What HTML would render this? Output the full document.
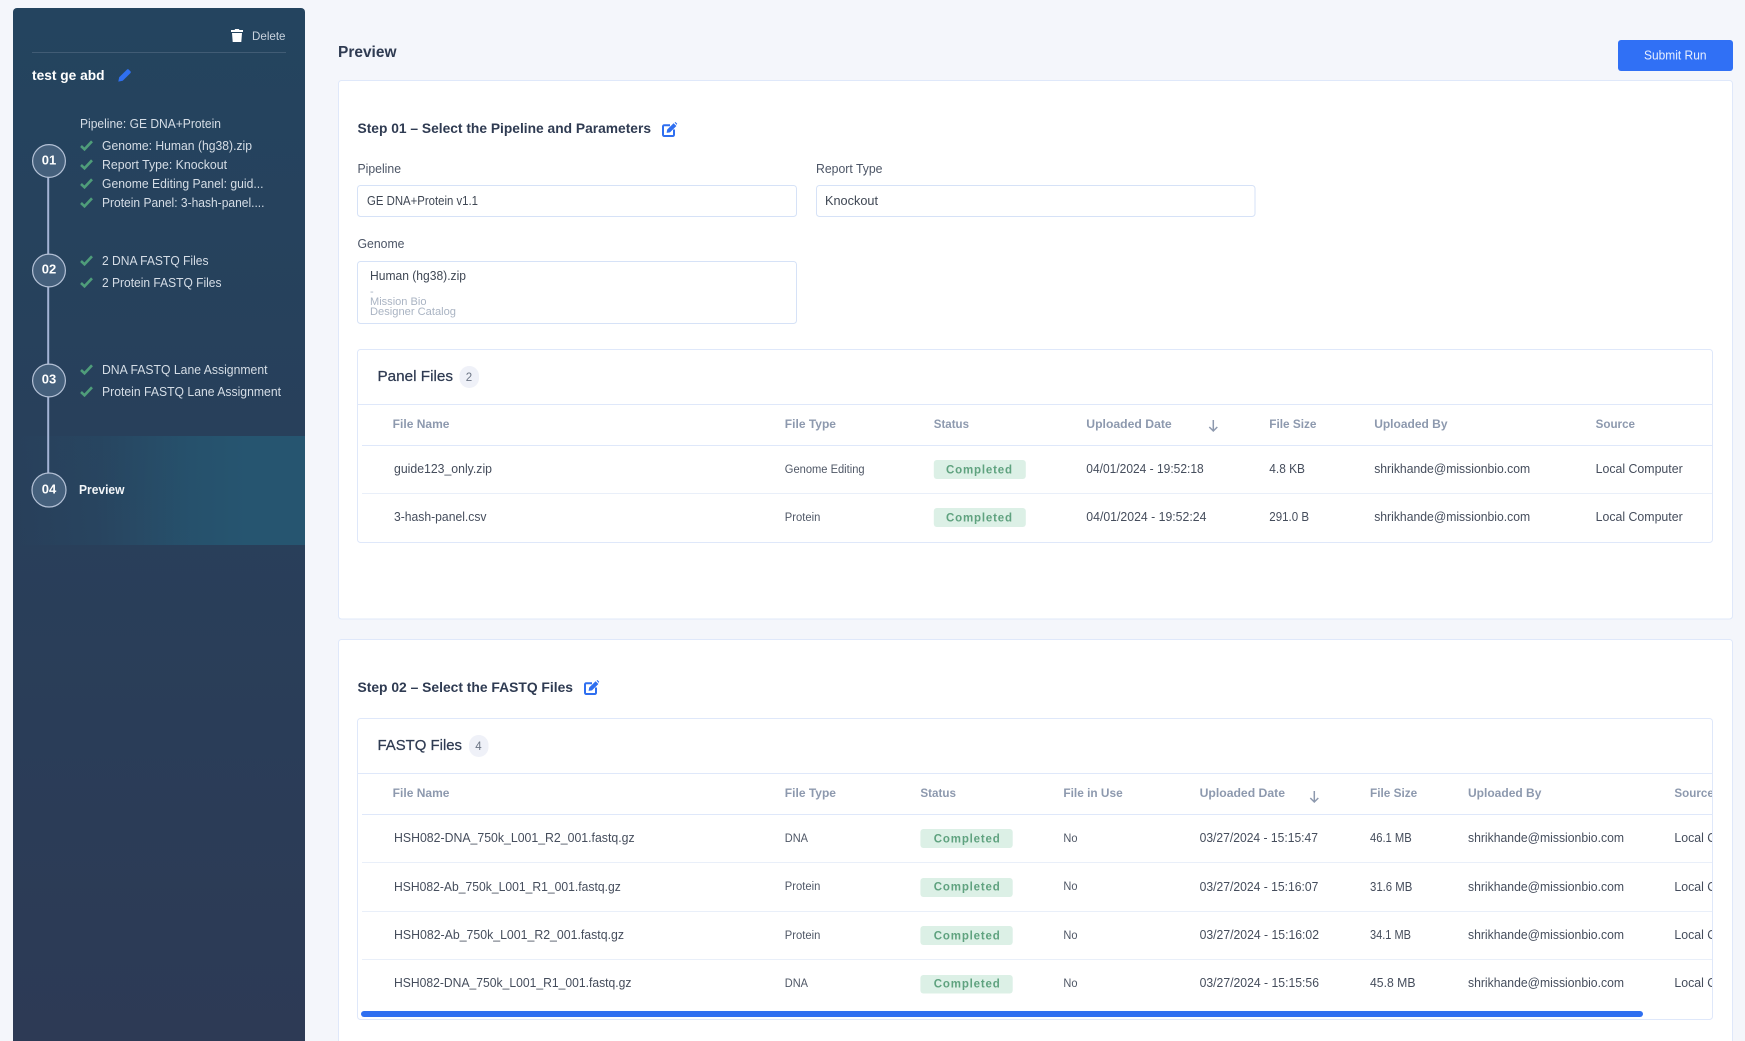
<!DOCTYPE html>
<html lang="en">
<head>
<meta charset="utf-8">
<title>Preview</title>
<style>
html,body{margin:0;padding:0;width:1745px;height:1041px;overflow:hidden;background:#f4f6fb}
svg{display:block;position:absolute;left:0;top:0}
text{font-family:"Liberation Sans",sans-serif;white-space:pre}
.side{font-size:12.5px;fill:#d5dde6}
.num{font-size:13px;font-weight:700;fill:#fff;text-anchor:middle}
.h1{font-size:14px;font-weight:700;fill:#2f3b52}
.lbl{font-size:12.5px;fill:#4c5566}
.val{font-size:12.5px;fill:#3f4754}
.sub{font-size:11px;fill:#aab4c3}
.tt{font-size:15px;fill:#2f3b52;stroke:#2f3b52;stroke-width:.25}
.cnt{font-size:11.5px;fill:#6b7484;text-anchor:middle}
.th{font-size:12px;font-weight:700;fill:#8d99ae}
.td{font-size:12.5px;fill:#454d5c}
.ty{font-size:11.5px;fill:#4f5766}
.st{font-size:11.5px;font-weight:700;fill:#5fa27f}
.box{fill:#fff;stroke:#dfe8fa;stroke-width:1}
.ln{stroke:#dfe8fa;stroke-width:1}
.ln2{stroke:#e9eff9;stroke-width:1}
.bd{fill:#dcf0e6}
.pill{fill:#eff1f8}
.ck{fill:none;stroke:#4f9d7a;stroke-width:2.6}
.circ{fill:#45607c;stroke:#b4c1d6;stroke-width:1.2}
</style>
</head>
<body>
<svg width="1745" height="1041" viewBox="0 0 1745 1041" xmlns="http://www.w3.org/2000/svg">
<defs>
<linearGradient id="sb" x1="0" y1="0" x2="0" y2="1"><stop offset="0" stop-color="#24445f"/><stop offset="1" stop-color="#2d3a55"/></linearGradient>
<linearGradient id="act" x1="0" y1="0" x2="1" y2="0"><stop offset="0" stop-color="#265570" stop-opacity="0"/><stop offset=".3" stop-color="#265570" stop-opacity=".25"/><stop offset=".6" stop-color="#265570" stop-opacity=".8"/><stop offset=".8" stop-color="#265570"/><stop offset="1" stop-color="#265570"/></linearGradient>
<clipPath id="clipT"><rect x="358" y="718" width="1354" height="302"/></clipPath>
</defs>

<!-- Sidebar -->
<path d="M13 1041V12a4 4 0 0 1 4-4h284a4 4 0 0 1 4 4v1029z" fill="url(#sb)"/>
<rect x="13" y="436" width="292" height="109" fill="url(#act)"/>

<path d="M231 30h3.5l.7-1h3.6l.7 1h3.5v2h-12zM232 33h10l-.7 9h-8.6z" fill="#fff"/>
<text x="252" y="40" font-size="12" fill="#c9d3de" textLength="33.5" lengthAdjust="spacingAndGlyphs">Delete</text>
<rect x="32" y="52" width="254" height="1" fill="#415c75"/>
<text x="32" y="80" font-size="14" font-weight="700" fill="#fff" textLength="72.5" lengthAdjust="spacingAndGlyphs">test ge abd</text>
<path d="M118.3 81.6l.9-4.3 7.6-7.6a1.5 1.5 0 0 1 2.1 0l1.4 1.4a1.5 1.5 0 0 1 0 2.1l-7.6 7.6z" fill="#2f6ff0"/>

<rect x="47.2" y="177" width="2" height="296" fill="#a3b3d4"/>

<circle class="circ" cx="49" cy="161" r="16.4"/>
<text class="num" x="49" y="164.3">01</text>
<circle class="circ" cx="49" cy="270.5" r="16.4"/>
<text class="num" x="49" y="273.5">02</text>
<circle class="circ" cx="49" cy="380.5" r="16.4"/>
<text class="num" x="49" y="383.5">03</text>
<circle class="circ" cx="49" cy="490" r="17"/>
<text class="num" x="49" y="493.3">04</text>

<text class="side" x="80" y="128" textLength="141" lengthAdjust="spacingAndGlyphs">Pipeline: GE DNA+Protein</text>
<path class="ck" d="M81 146l3.5 3.3 7.5-8"/>
<text class="side" x="102" y="150" textLength="150" lengthAdjust="spacingAndGlyphs">Genome: Human (hg38).zip</text>
<path class="ck" d="M81 165l3.5 3.3 7.5-8"/>
<text class="side" x="102" y="169" textLength="125" lengthAdjust="spacingAndGlyphs">Report Type: Knockout</text>
<path class="ck" d="M81 184l3.5 3.3 7.5-8"/>
<text class="side" x="102" y="188" textLength="161.5" lengthAdjust="spacingAndGlyphs">Genome Editing Panel: guid...</text>
<path class="ck" d="M81 203l3.5 3.3 7.5-8"/>
<text class="side" x="102" y="207" textLength="162.5" lengthAdjust="spacingAndGlyphs">Protein Panel: 3-hash-panel....</text>
<path class="ck" d="M81 261l3.5 3.3 7.5-8"/>
<text class="side" x="102" y="265" textLength="106.5" lengthAdjust="spacingAndGlyphs">2 DNA FASTQ Files</text>
<path class="ck" d="M81 283l3.5 3.3 7.5-8"/>
<text class="side" x="102" y="287" textLength="119.5" lengthAdjust="spacingAndGlyphs">2 Protein FASTQ Files</text>
<path class="ck" d="M81 370l3.5 3.3 7.5-8"/>
<text class="side" x="102" y="374" textLength="165.5" lengthAdjust="spacingAndGlyphs">DNA FASTQ Lane Assignment</text>
<path class="ck" d="M81 392l3.5 3.3 7.5-8"/>
<text class="side" x="102" y="396" textLength="179" lengthAdjust="spacingAndGlyphs">Protein FASTQ Lane Assignment</text>
<text x="79" y="494" font-size="12.5" font-weight="700" fill="#f2f5f8" textLength="45.5" lengthAdjust="spacingAndGlyphs">Preview</text>

<!-- Header -->
<text x="338" y="57" font-size="15.5" font-weight="700" fill="#2f3b52" textLength="58.5" lengthAdjust="spacingAndGlyphs">Preview</text>
<rect x="1618" y="40" width="115" height="31" rx="3" fill="#3070f5"/>
<text x="1644" y="59.5" font-size="13" fill="#e6eeff" textLength="62.5" lengthAdjust="spacingAndGlyphs">Submit Run</text>

<!-- Card 1 -->
<rect class="box" x="338.5" y="80.5" width="1394" height="538.5" rx="3"/>
<text class="h1" x="357.5" y="133" textLength="293.5" lengthAdjust="spacingAndGlyphs">Step 01 – Select the Pipeline and Parameters</text>
<g transform="translate(662,122)"><path d="M8 3.2H2.2A1.2 1.2 0 0 0 1 4.4v8.4A1.2 1.2 0 0 0 2.2 14h8.6a1.2 1.2 0 0 0 1.2-1.2V7.5" fill="none" stroke="#2f6ff0" stroke-width="2"/><path d="M4.6 10.9l.6-3.4L11.6 1.2l2.8 2.8-6.4 6.4zM12.6.6l.9-.6 1.7 1.7-.6 1.2z" fill="#2f6ff0"/></g>

<text class="lbl" x="357.5" y="173" textLength="43.5" lengthAdjust="spacingAndGlyphs">Pipeline</text>
<rect class="box" x="357.5" y="185.5" width="439" height="31" rx="3" style="stroke:#d6e2f7"/>
<text class="val" x="367" y="205" textLength="111" lengthAdjust="spacingAndGlyphs">GE DNA+Protein v1.1</text>
<text class="lbl" x="816" y="173" textLength="66.5" lengthAdjust="spacingAndGlyphs">Report Type</text>
<rect class="box" x="816.5" y="185.5" width="438.5" height="31" rx="3" style="stroke:#d6e2f7"/>
<text class="val" x="825" y="205" textLength="53" lengthAdjust="spacingAndGlyphs">Knockout</text>
<text class="lbl" x="357.5" y="248" textLength="47" lengthAdjust="spacingAndGlyphs">Genome</text>
<rect class="box" x="357.5" y="261.5" width="439" height="62" rx="3" style="stroke:#d6e2f7"/>
<text class="val" x="370" y="280" textLength="96" lengthAdjust="spacingAndGlyphs">Human (hg38).zip</text>
<text class="sub" x="370" y="295">-</text>
<text class="sub" x="370" y="305" textLength="56.5" lengthAdjust="spacingAndGlyphs">Mission Bio</text>
<text class="sub" x="370" y="315" textLength="86" lengthAdjust="spacingAndGlyphs">Designer Catalog</text>

<!-- Panel Files -->
<rect class="box" x="357.5" y="349.5" width="1355" height="193" rx="3"/>
<text class="tt" x="377.5" y="381" textLength="75.5" lengthAdjust="spacingAndGlyphs">Panel Files</text>
<rect class="pill" x="459.5" y="366" width="19.5" height="22" rx="9.7"/>
<text class="cnt" x="469" y="381">2</text>
<line class="ln" x1="358" y1="404.5" x2="1712" y2="404.5"/>
<text class="th" x="392.7" y="428" textLength="56.8" lengthAdjust="spacingAndGlyphs">File Name</text>
<text class="th" x="784.8" y="428" textLength="51.2" lengthAdjust="spacingAndGlyphs">File Type</text>
<text class="th" x="933.8" y="428" textLength="35.2" lengthAdjust="spacingAndGlyphs">Status</text>
<text class="th" x="1086.3" y="428" textLength="85.4" lengthAdjust="spacingAndGlyphs">Uploaded Date</text>
<path d="M1213.3 420v11M1209.3 427l4 4 4-4" fill="none" stroke="#8d99ae" stroke-width="1.5"/>
<text class="th" x="1269.3" y="428" textLength="47.2" lengthAdjust="spacingAndGlyphs">File Size</text>
<text class="th" x="1374.2" y="428" textLength="73.3" lengthAdjust="spacingAndGlyphs">Uploaded By</text>
<text class="th" x="1595.6" y="428" textLength="39.4" lengthAdjust="spacingAndGlyphs">Source</text>
<line class="ln" x1="362" y1="445.5" x2="1712" y2="445.5"/>

<text class="td" x="394" y="473" textLength="98" lengthAdjust="spacingAndGlyphs">guide123_only.zip</text>
<text class="ty" x="784.8" y="473" textLength="79.8" lengthAdjust="spacingAndGlyphs">Genome Editing</text>
<rect class="bd" x="933.8" y="460" width="92" height="19" rx="3"/>
<text class="st" x="946" y="473.5" textLength="66" lengthAdjust="spacing">Completed</text>
<text class="td" x="1086.3" y="473" textLength="117.4" lengthAdjust="spacingAndGlyphs">04/01/2024 - 19:52:18</text>
<text class="td" x="1269.3" y="473" textLength="35.7" lengthAdjust="spacingAndGlyphs">4.8 KB</text>
<text class="td" x="1374.2" y="473" textLength="156" lengthAdjust="spacingAndGlyphs">shrikhande@missionbio.com</text>
<text class="td" x="1595.6" y="473" textLength="87.1" lengthAdjust="spacingAndGlyphs">Local Computer</text>
<line class="ln2" x1="362" y1="493.5" x2="1712" y2="493.5"/>

<text class="td" x="394" y="521" textLength="92.5" lengthAdjust="spacingAndGlyphs">3-hash-panel.csv</text>
<text class="ty" x="784.8" y="521" textLength="35.5" lengthAdjust="spacingAndGlyphs">Protein</text>
<rect class="bd" x="933.8" y="508" width="92" height="19" rx="3"/>
<text class="st" x="946" y="521.5" textLength="66" lengthAdjust="spacing">Completed</text>
<text class="td" x="1086.3" y="521" textLength="120.1" lengthAdjust="spacingAndGlyphs">04/01/2024 - 19:52:24</text>
<text class="td" x="1269.3" y="521" textLength="39.7" lengthAdjust="spacingAndGlyphs">291.0 B</text>
<text class="td" x="1374.2" y="521" textLength="156" lengthAdjust="spacingAndGlyphs">shrikhande@missionbio.com</text>
<text class="td" x="1595.6" y="521" textLength="87.1" lengthAdjust="spacingAndGlyphs">Local Computer</text>

<!-- Card 2 -->
<rect class="box" x="338.5" y="639.5" width="1394" height="440" rx="3"/>
<text class="h1" x="357.5" y="692" textLength="215.5" lengthAdjust="spacingAndGlyphs">Step 02 – Select the FASTQ Files</text>
<g transform="translate(584,680)"><path d="M8 3.2H2.2A1.2 1.2 0 0 0 1 4.4v8.4A1.2 1.2 0 0 0 2.2 14h8.6a1.2 1.2 0 0 0 1.2-1.2V7.5" fill="none" stroke="#2f6ff0" stroke-width="2"/><path d="M4.6 10.9l.6-3.4L11.6 1.2l2.8 2.8-6.4 6.4zM12.6.6l.9-.6 1.7 1.7-.6 1.2z" fill="#2f6ff0"/></g>

<rect class="box" x="357.5" y="718.5" width="1355" height="301" rx="3"/>
<text class="tt" x="377.5" y="750" textLength="84.5" lengthAdjust="spacingAndGlyphs">FASTQ Files</text>
<rect class="pill" x="469" y="735" width="19.5" height="22" rx="9.7"/>
<text class="cnt" x="478.5" y="750">4</text>
<line class="ln" x1="358" y1="773.5" x2="1712" y2="773.5"/>

<g clip-path="url(#clipT)">
<text class="th" x="392.7" y="797" textLength="56.8" lengthAdjust="spacingAndGlyphs">File Name</text>
<text class="th" x="784.8" y="797" textLength="51.2" lengthAdjust="spacingAndGlyphs">File Type</text>
<text class="th" x="920.4" y="797" textLength="35.6" lengthAdjust="spacingAndGlyphs">Status</text>
<text class="th" x="1063.4" y="797" textLength="59.3" lengthAdjust="spacingAndGlyphs">File in Use</text>
<text class="th" x="1199.6" y="797" textLength="85.4" lengthAdjust="spacingAndGlyphs">Uploaded Date</text>
<path d="M1314.3 791v11M1310.3 798l4 4 4-4" fill="none" stroke="#8d99ae" stroke-width="1.5"/>
<text class="th" x="1370" y="797" textLength="47.2" lengthAdjust="spacingAndGlyphs">File Size</text>
<text class="th" x="1468" y="797" textLength="73.4" lengthAdjust="spacingAndGlyphs">Uploaded By</text>
<text class="th" x="1674.4" y="797" textLength="39.4" lengthAdjust="spacingAndGlyphs">Source</text>
<line class="ln" x1="362" y1="814.5" x2="1712" y2="814.5"/>

<text class="td" x="394" y="842" textLength="240.6" lengthAdjust="spacingAndGlyphs">HSH082-DNA_750k_L001_R2_001.fastq.gz</text>
<text class="ty" x="784.8" y="842" textLength="23.2" lengthAdjust="spacingAndGlyphs">DNA</text>
<rect class="bd" x="920.4" y="829" width="92.3" height="19" rx="3"/>
<text class="st" x="933.8" y="842.5" textLength="66" lengthAdjust="spacing">Completed</text>
<text class="ty" x="1063.4" y="842" textLength="14.1" lengthAdjust="spacingAndGlyphs">No</text>
<text class="td" x="1199.6" y="842" textLength="118.4" lengthAdjust="spacingAndGlyphs">03/27/2024 - 15:15:47</text>
<text class="td" x="1370" y="842" textLength="41.7" lengthAdjust="spacingAndGlyphs">46.1 MB</text>
<text class="td" x="1468" y="842" textLength="156" lengthAdjust="spacingAndGlyphs">shrikhande@missionbio.com</text>
<text class="td" x="1674.4" y="842" textLength="87.1" lengthAdjust="spacingAndGlyphs">Local Computer</text>
<line class="ln2" x1="362" y1="862.5" x2="1712" y2="862.5"/>

<text class="td" x="394" y="891" textLength="226.8" lengthAdjust="spacingAndGlyphs">HSH082-Ab_750k_L001_R1_001.fastq.gz</text>
<text class="ty" x="784.8" y="890" textLength="35.5" lengthAdjust="spacingAndGlyphs">Protein</text>
<rect class="bd" x="920.4" y="878" width="92.3" height="19" rx="3"/>
<text class="st" x="933.8" y="890.5" textLength="66" lengthAdjust="spacing">Completed</text>
<text class="ty" x="1063.4" y="890" textLength="14.1" lengthAdjust="spacingAndGlyphs">No</text>
<text class="td" x="1199.6" y="891" textLength="118.8" lengthAdjust="spacingAndGlyphs">03/27/2024 - 15:16:07</text>
<text class="td" x="1370" y="891" textLength="42.3" lengthAdjust="spacingAndGlyphs">31.6 MB</text>
<text class="td" x="1468" y="891" textLength="156" lengthAdjust="spacingAndGlyphs">shrikhande@missionbio.com</text>
<text class="td" x="1674.4" y="891" textLength="87.1" lengthAdjust="spacingAndGlyphs">Local Computer</text>
<line class="ln2" x1="362" y1="911.5" x2="1712" y2="911.5"/>

<text class="td" x="394" y="939" textLength="230" lengthAdjust="spacingAndGlyphs">HSH082-Ab_750k_L001_R2_001.fastq.gz</text>
<text class="ty" x="784.8" y="939" textLength="35.5" lengthAdjust="spacingAndGlyphs">Protein</text>
<rect class="bd" x="920.4" y="926" width="92.3" height="19" rx="3"/>
<text class="st" x="933.8" y="939.5" textLength="66" lengthAdjust="spacing">Completed</text>
<text class="ty" x="1063.4" y="939" textLength="14.1" lengthAdjust="spacingAndGlyphs">No</text>
<text class="td" x="1199.6" y="939" textLength="119.4" lengthAdjust="spacingAndGlyphs">03/27/2024 - 15:16:02</text>
<text class="td" x="1370" y="939" textLength="41" lengthAdjust="spacingAndGlyphs">34.1 MB</text>
<text class="td" x="1468" y="939" textLength="156" lengthAdjust="spacingAndGlyphs">shrikhande@missionbio.com</text>
<text class="td" x="1674.4" y="939" textLength="87.1" lengthAdjust="spacingAndGlyphs">Local Computer</text>
<line class="ln2" x1="362" y1="959.5" x2="1712" y2="959.5"/>

<text class="td" x="394" y="987" textLength="237.5" lengthAdjust="spacingAndGlyphs">HSH082-DNA_750k_L001_R1_001.fastq.gz</text>
<text class="ty" x="784.8" y="987" textLength="23.2" lengthAdjust="spacingAndGlyphs">DNA</text>
<rect class="bd" x="920.4" y="975" width="92.3" height="18.5" rx="3"/>
<text class="st" x="933.8" y="987.5" textLength="66" lengthAdjust="spacing">Completed</text>
<text class="ty" x="1063.4" y="987" textLength="14.1" lengthAdjust="spacingAndGlyphs">No</text>
<text class="td" x="1199.6" y="987" textLength="119.4" lengthAdjust="spacingAndGlyphs">03/27/2024 - 15:15:56</text>
<text class="td" x="1370" y="987" textLength="45.5" lengthAdjust="spacingAndGlyphs">45.8 MB</text>
<text class="td" x="1468" y="987" textLength="156" lengthAdjust="spacingAndGlyphs">shrikhande@missionbio.com</text>
<text class="td" x="1674.4" y="987" textLength="87.1" lengthAdjust="spacingAndGlyphs">Local Computer</text>
</g>
<rect x="361" y="1011" width="1282" height="6" rx="3" fill="#2f6ff0"/>
</svg>
</body>
</html>
